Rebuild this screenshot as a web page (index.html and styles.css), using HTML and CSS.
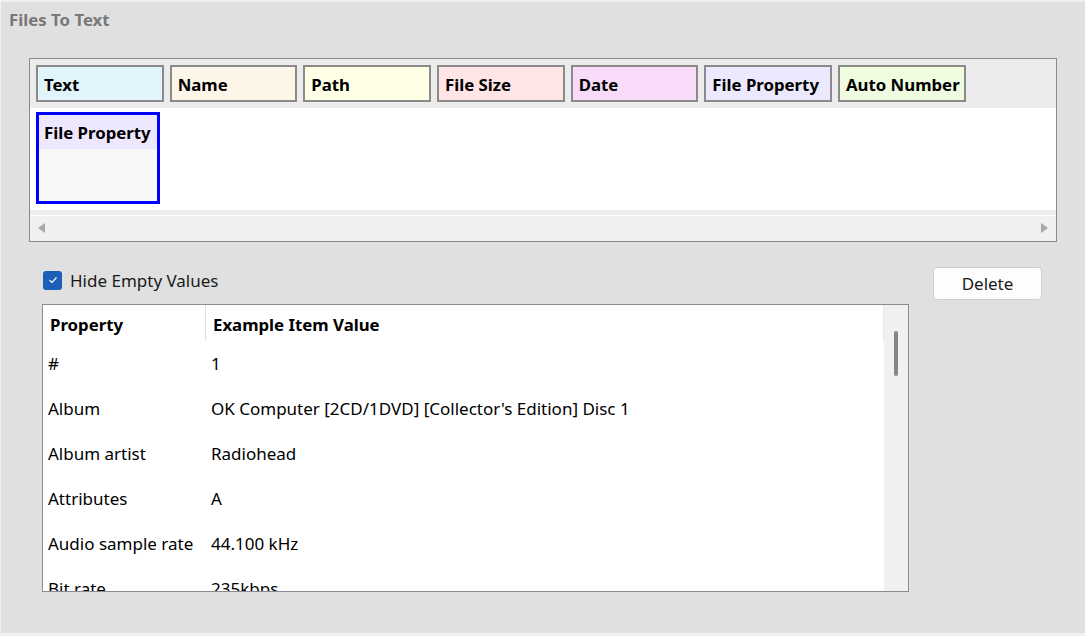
FILE: index.html
```html
<!DOCTYPE html>
<html>
<head>
<meta charset="utf-8">
<link rel="stylesheet" href="styles.css">
</head>
<body>
<div class="window">
  <div class="title">Files To Text</div>
  <div class="panel">
    <div class="tabstrip">
      <div class="tab t-text">Text</div>
      <div class="tab t-name">Name</div>
      <div class="tab t-path">Path</div>
      <div class="tab t-size">File Size</div>
      <div class="tab t-date">Date</div>
      <div class="tab t-prop">File Property</div>
      <div class="tab t-auto">Auto Number</div>
    </div>
    <div class="canvas">
      <div class="card">
        <div class="card-head">File Property</div>
        <div class="card-body"></div>
      </div>
    </div>
    <div class="gap-stripe"></div>
    <div class="hscroll">
      <span class="arrow-left"></span>
      <span class="arrow-right"></span>
    </div>
  </div>
  <div class="lower">
    <div class="left">
      <label class="check-row">
        <span class="checkbox">
          <svg width="10" height="8" viewBox="0 0 10 8"><path d="M1.5 4.2 L4 6.5 L8.5 1.5" fill="none" stroke="#fff" stroke-width="1.2"/></svg>
        </span>
        <span class="check-label">Hide Empty Values</span>
      </label>
      <div class="table">
        <div class="table-content">
          <div class="thead">
            <div class="th th-prop">Property</div>
            <div class="th th-val">Example Item Value</div>
          </div>
          <div class="row"><div class="c-prop">#</div><div class="c-val">1</div></div>
          <div class="row"><div class="c-prop">Album</div><div class="c-val">OK Computer [2CD/1DVD] [Collector's Edition] Disc 1</div></div>
          <div class="row"><div class="c-prop">Album artist</div><div class="c-val">Radiohead</div></div>
          <div class="row"><div class="c-prop">Attributes</div><div class="c-val">A</div></div>
          <div class="row"><div class="c-prop">Audio sample rate</div><div class="c-val">44.100 kHz</div></div>
          <div class="row"><div class="c-prop">Bit rate</div><div class="c-val">235kbps</div></div>
        </div>
        <div class="vscroll"><div class="thumb"></div></div>
      </div>
    </div>
    <div class="right">
      <button class="btn">Delete</button>
    </div>
  </div>
</div>
</body>
</html>
```

FILE: styles.css
```css
* { box-sizing: border-box; }
html, body { margin: 0; padding: 0; }
body {
  background: #f0f0f0;
  font-family: "Noto Sans", "Open Sans", sans-serif;
  font-size: 17px;
  color: #000;
  width: 1085px;
  height: 636px;
  overflow: hidden;
}
.window {
  margin: 2px 0 0 1px;
  height: 631px;
  background: #e0e0e0;
  padding-top: 7px;
}
.title {
  padding-left: 8px;
  height: 22px;
  line-height: 22px;
  font-weight: bold;
  font-size: 16.8px;
  color: #787878;
}
.panel {
  margin: 27px 0 0 28px;
  width: 1028px;
  height: 184px;
  border: 1px solid #8a8a8a;
  background: #ececec;
  display: flex;
  flex-direction: column;
}
.tabstrip {
  height: 49px;
  padding: 6px 0 0 6px;
  display: flex;
  gap: 6px;
}
.tab {
  width: 127.67px;
  height: 37px;
  border: 2px solid #8a8a8a;
  font-weight: bold;
  font-size: 16.8px;
  line-height: 36px;
  padding-left: 6px;
  white-space: nowrap;
  overflow: hidden;
}
.t-text { background: #e1f4fb; }
.t-name { background: #fef5e9; }
.t-path { background: #ffffe5; }
.t-size { background: #ffe5e5; }
.t-date { background: #f8dbf8; }
.t-prop { background: #ece8fd; }
.t-auto { background: #f0fce0; }
.canvas {
  height: 102px;
  background: #fff;
  padding: 4px 0 0 6px;
}
.card {
  width: 124px;
  height: 92px;
  border: 3px solid #0000ff;
  background: #f8f8f8;
}
.card-head {
  height: 34px;
  background: #ede8fd;
  font-weight: bold;
  font-size: 16.8px;
  line-height: 36px;
  padding-left: 5px;
  white-space: nowrap;
}
.gap-stripe {
  height: 6px;
  background: #ececec;
  border-bottom: 1px solid #fff;
  flex: none;
}
.hscroll {
  flex: 1;
  background: #f0f0f0;
  position: relative;
}
.arrow-left, .arrow-right {
  position: absolute;
  top: 7px;
  width: 0;
  height: 0;
  border-top: 5px solid transparent;
  border-bottom: 5px solid transparent;
}
.arrow-left { left: 8px; border-right: 7px solid #a8a8a8; }
.arrow-right { right: 8px; border-left: 7px solid #a8a8a8; }
.lower {
  display: flex;
  padding-left: 41px;
}
.left { width: 867px; }
.check-row {
  display: flex;
  align-items: center;
  height: 20px;
  margin-top: 28px;
  padding-left: 1px;
}
.checkbox {
  width: 19px;
  height: 19px;
  border-radius: 3px;
  background: #1d5fb8;
  display: flex;
  align-items: center;
  justify-content: center;
}
.check-label {
  margin-left: 8px;
  font-size: 17px;
  color: #1a1a1a;
}
.table {
  margin-top: 14px;
  height: 288px;
  border: 1px solid #8a8a96;
  background: #fff;
  display: flex;
  overflow: hidden;
}
.table-content {
  flex: 1;
  overflow: hidden;
}
.thead {
  display: flex;
  height: 36px;
  border-right: 1px solid #e6e6e6;
}
.th {
  font-weight: bold;
  font-size: 16.8px;
  line-height: 39px;
}
.th-prop {
  width: 163px;
  padding-left: 7px;
  border-right: 1px solid #e0e0e0;
  height: 36px;
}
.th-val { padding-left: 7px; }
.row {
  display: flex;
  height: 45px;
  align-items: center;
  font-size: 17px;
}
.c-prop { width: 163px; padding-left: 5px; white-space: nowrap; }
.c-val { padding-left: 5px; white-space: nowrap; }
.vscroll {
  width: 24px;
  background: #f0f0f0;
  position: relative;
  flex: none;
}
.thumb {
  position: absolute;
  left: 10px;
  top: 26px;
  width: 4px;
  height: 45px;
  border-radius: 2px;
  background: #868686;
}
.right {
  margin-left: 24px;
  padding-top: 25px;
}
.btn {
  width: 109px;
  height: 33px;
  background: #fdfdfd;
  border: 1px solid #cfcfcf;
  border-radius: 4px;
  font-family: "Noto Sans", "Open Sans", sans-serif;
  font-size: 17px;
  color: #1a1a1a;
  padding: 0;
}
```
